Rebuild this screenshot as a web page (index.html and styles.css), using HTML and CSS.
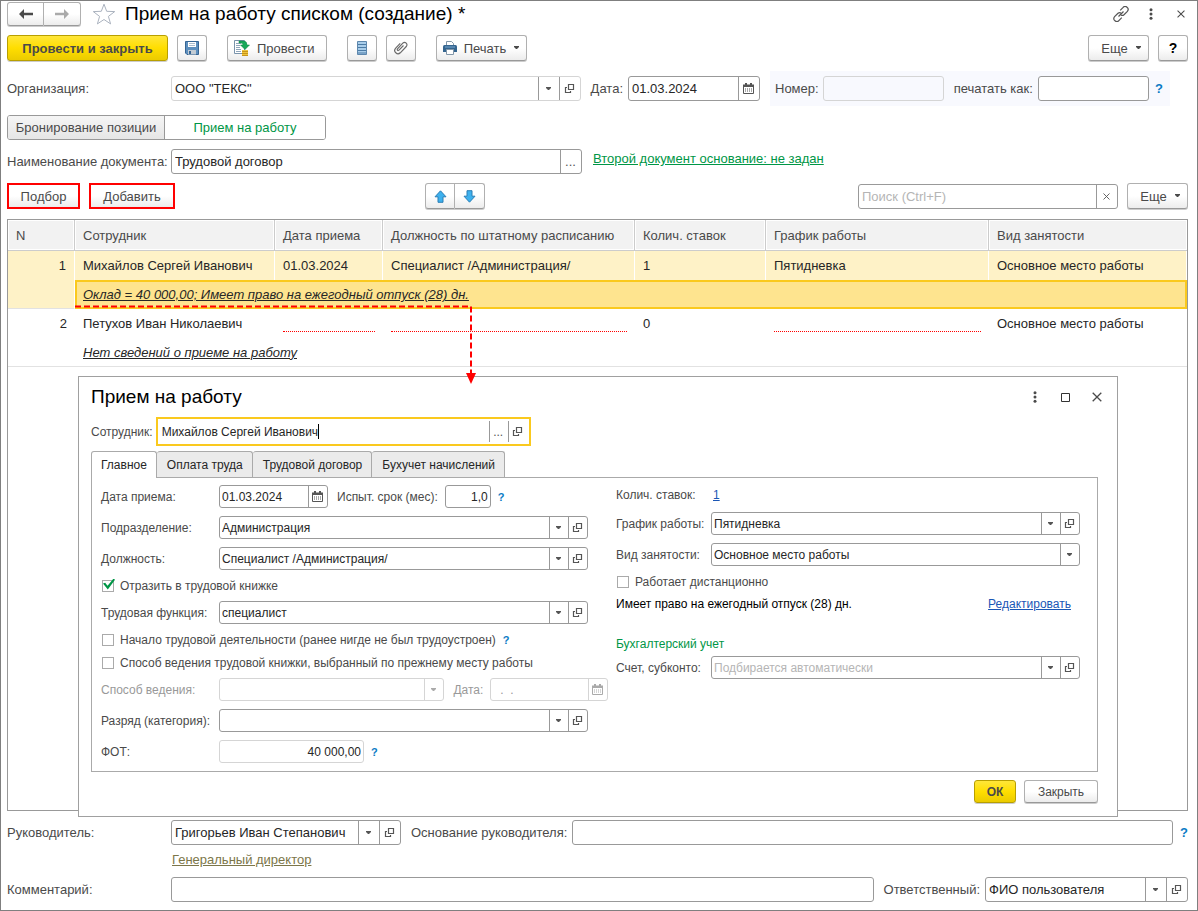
FILE: index.html
```html
<!DOCTYPE html>
<html lang="ru">
<head>
<meta charset="utf-8">
<title>Прием на работу списком (создание)</title>
<link rel="stylesheet" href="styles.css">
</head>
<body>
<svg class="sprite" aria-hidden="true">
  <symbol id="i-drop" viewBox="0 0 7 4"><path d="M1 0h5v1L4 3H3L1 1z" fill="currentColor"/></symbol>
  <symbol id="i-open" viewBox="0 0 11 11"><path d="M4.5 1.5h5v5h-5z" fill="none" stroke="currentColor" stroke-width="1.200"/><path d="M3 4.500H1.500v5h5V8" fill="none" stroke="currentColor" stroke-width="1.200"/></symbol>
  <symbol id="i-cal" viewBox="0 0 11 11"><path d="M1 1.500h1V0h2v1.500h3V0h2v1.500h2V4H0V1.500z" fill="currentColor"/><path d="M.5 3v7.500h10V3" fill="none" stroke="currentColor"/><path d="M2 6h7M2 8h7" stroke="currentColor" stroke-dasharray="1 1"/></symbol>
  <symbol id="i-dots" viewBox="0 0 4 12"><g fill="currentColor"><circle cx="2" cy="1.700" r="1.500"/><circle cx="2" cy="6" r="1.500"/><circle cx="2" cy="10.300" r="1.500"/></g></symbol>
  <symbol id="i-x" viewBox="0 0 10 10"><path d="M.7.7l8.600 8.600M9.300.7L.7 9.300" stroke="currentColor" stroke-width="1.300"/></symbol>
</svg>

<main class="window">
  <header class="titlebar">
    <div class="pair nav">
      <button class="btn" aria-label="Назад"><svg width="14" height="10" viewBox="0 0 14 10"><path d="M0 5l5-5v3.700h9v2.600H5V10z" fill="#4a4a4a"/></svg></button>
      <button class="btn" aria-label="Вперед"><svg width="14" height="10" viewBox="0 0 14 10"><path d="M14 5L9 0v3.700H0v2.600h9V10z" fill="#aaa"/></svg></button>
    </div>
    <button class="icon-btn star" aria-label="В избранное"><svg width="24" height="22" viewBox="0 0 24 22"><path d="M12 1.200l2.700 7.100 8 .3-6.300 4.800 2.200 7.500L12 16.500l-6.600 4.400 2.200-7.500L1.300 8.600l8-.3z" fill="#fff" stroke="#abb3bf"/></svg></button>
    <h1>Прием на работу списком (создание) *</h1>
    <div class="window-tools">
      <button class="icon-btn" aria-label="Ссылка"><svg width="16" height="16" viewBox="0 0 16 16" fill="none" stroke="#555" stroke-width="1.200"><path d="M7.200 4.300l2.700-2.700a2.600 2.600 0 0 1 4.500 3.700L11 8.700a2.500 2.500 0 0 1-3 .3M8.800 11.700l-2.700 2.700a2.600 2.600 0 0 1-4.500-3.700L5 7.300a2.500 2.500 0 0 1 3-.3M5.500 10.500l5-5"/></svg></button>
      <button class="icon-btn" aria-label="Меню"><svg width="4" height="12"><use href="#i-dots"/></svg></button>
      <button class="icon-btn" aria-label="Закрыть окно"><svg width="8" height="8"><use href="#i-x"/></svg></button>
    </div>
  </header>

  <div class="toolbar">
    <button class="btn primary post-close">Провести и закрыть</button>
    <button class="btn square" aria-label="Записать"><svg width="14" height="14" viewBox="0 0 14 14"><path d="M.5.5h13v13H2L.5 12z" fill="#5d8fbe" stroke="#366594"/><path d="M3 1h8v5H3z" fill="#fff"/><path d="M4 2.500h6M4 4.500h6" stroke="#a9bccd"/><path d="M3 9h8v4.500H3z" fill="#c3ccd4"/><path d="M4 10h2v3H4z" fill="#366594"/></svg></button>
    <button class="btn post"><svg width="16" height="16" viewBox="0 0 16 16"><path d="M.5.5h10v13H.5z" fill="#fff" stroke="#7993ab"/><path d="M2 3.500h5M2 5.500h4M2 7.500h4M2 9.500h5M2 11.500h5" stroke="#8fa5ba"/><path d="M5 1h4.500q3.500 0 3.500 4h2.500L11 9.500 6.500 5H9q0-2-2-2H5z" fill="#16a85a" stroke="#0b8342" stroke-width=".5"/><path d="M8 10h6v5.500H8z" fill="#f0c53d"/><path d="M8 11.500h6M8 13.500h6M8 15.500h6" stroke="#c6951b"/></svg>Провести</button>
    <button class="btn square" aria-label="Реестр"><svg width="10" height="14" viewBox="0 0 10 14"><path d="M.5.500h9v13h-9z" fill="#a9cdea" stroke="#5d87ad"/><path d="M1 3.500h8M1 6.500h8M1 9.500h8M1 12h8" stroke="#4c7ba5"/></svg></button>
    <button class="btn square" aria-label="Файлы"><svg width="14" height="14" viewBox="0 0 14 14" fill="none" stroke="#6b6b6b" stroke-width="1.200"><path d="M9.500 4.500L5 9.200a1 1 0 0 1-1.500-1.400l5.300-5.600a2.400 2.400 0 0 1 3.500 3.300l-6 6.300a3.300 3.300 0 0 1-4.800-4.500l4.700-5"/></svg></button>
    <button class="btn print"><svg width="14" height="14" viewBox="0 0 14 14"><path d="M3.500 5V.500h5l2 2V5" fill="#fff" stroke="#8297a9"/><path d="M0 5.500Q0 4 1.500 4h11Q14 4 14 5.500V11H0z" fill="#35658f"/><path d="M2 6h10" stroke="#78a9d1"/><path d="M3.500 8.500h7v5h-7z" fill="#fff" stroke="#8297a9"/></svg>Печать<svg class="caret" width="7" height="4"><use href="#i-drop"/></svg></button>
    <button class="btn more push">Еще<svg class="caret" width="7" height="4"><use href="#i-drop"/></svg></button>
    <button class="btn square help-btn" aria-label="Справка">?</button>
  </div>

  <div class="row org-row">
    <label class="side" for="org">Организация:</label>
    <div class="field soft org"><input id="org" value='ООО "ТЕКС"'><button aria-label="Выбрать"><svg width="7" height="4"><use href="#i-drop"/></svg></button><button aria-label="Открыть"><svg width="11" height="11"><use href="#i-open"/></svg></button></div>
    <label class="gap-l" for="date">Дата:</label>
    <div class="field date"><input id="date" value="01.03.2024"><button aria-label="Календарь"><svg width="11" height="11"><use href="#i-cal"/></svg></button></div>
    <div class="number-panel">
      <label for="num">Номер:</label>
      <div class="field soft num"><input id="num" disabled></div>
      <label class="gap-l" for="printas">печатать как:</label>
      <div class="field as"><input id="printas"></div>
      <button class="hint" aria-label="Подсказка">?</button>
    </div>
  </div>

  <div class="segment">
    <button>Бронирование позиции</button>
    <button class="on">Прием на работу</button>
  </div>

  <div class="row">
    <label class="side" for="docname">Наименование документа:</label>
    <div class="field docname"><input id="docname" value="Трудовой договор"><button aria-label="Выбрать">...</button></div>
    <a class="green second-doc" href="#">Второй документ основание: не задан</a>
  </div>

  <div class="toolbar list-bar">
    <button class="btn marked pick">Подбор</button>
    <button class="btn marked add">Добавить</button>
    <div class="pair move">
      <button class="btn" aria-label="Вверх"><svg width="13" height="13" viewBox="0 0 13 13"><path d="M6.500.8l5.500 6H9v5.500H4V6.800H1z" fill="#3db1ee" stroke="#2b7eb5"/></svg></button>
      <button class="btn" aria-label="Вниз"><svg width="13" height="13" viewBox="0 0 13 13"><path d="M6.500 12.200l5.500-6H9V.7H4v5.500H1z" fill="#3db1ee" stroke="#2b7eb5"/></svg></button>
    </div>
    <div class="field push search"><input aria-label="Поиск" placeholder="Поиск (Ctrl+F)"><button aria-label="Очистить"><svg width="7" height="7"><use href="#i-x"/></svg></button></div>
    <button class="btn more">Еще<svg class="caret" width="7" height="4"><use href="#i-drop"/></svg></button>
  </div>

  <div class="grid">
    <table>
      <colgroup><col class="c-n"><col class="c-emp"><col class="c-date"><col class="c-pos"><col class="c-rate"><col class="c-sched"><col></colgroup>
      <thead><tr><th>N</th><th>Сотрудник</th><th>Дата приема</th><th>Должность по штатному расписанию</th><th>Колич. ставок</th><th>График работы</th><th>Вид занятости</th></tr></thead>
      <tbody class="selected">
        <tr><td class="n">1</td><td>Михайлов Сергей Иванович</td><td>01.03.2024</td><td>Специалист /Администрация/</td><td>1</td><td>Пятидневка</td><td>Основное место работы</td></tr>
        <tr class="info"><td></td><td class="current" colspan="6"><a href="#">Оклад = 40 000,00; Имеет право на ежегодный отпуск (28) дн.</a></td></tr>
      </tbody>
      <tbody>
        <tr><td class="n">2</td><td>Петухов Иван Николаевич</td><td><span class="blank"></span></td><td><span class="blank"></span></td><td>0</td><td><span class="blank"></span></td><td>Основное место работы</td></tr>
        <tr class="info"><td></td><td colspan="6"><a href="#">Нет сведений о приеме на работу</a></td></tr>
      </tbody>
    </table>
  </div>

  <div class="row">
    <label class="side" for="head">Руководитель:</label>
    <div class="field head"><input id="head" value="Григорьев Иван Степанович"><button aria-label="Выбрать"><svg width="7" height="4"><use href="#i-drop"/></svg></button><button aria-label="Открыть"><svg width="11" height="11"><use href="#i-open"/></svg></button></div>
    <label class="gap-l" for="basis">Основание руководителя:</label>
    <div class="field grow"><input id="basis"></div>
    <button class="hint" aria-label="Подсказка">?</button>
  </div>
  <div class="row position-row"><a href="#">Генеральный директор</a></div>
  <div class="row">
    <label class="side" for="comment">Комментарий:</label>
    <div class="field grow"><input id="comment"></div>
    <label class="gap-l" for="resp">Ответственный:</label>
    <div class="field resp"><input id="resp" value="ФИО пользователя"><button aria-label="Выбрать"><svg width="7" height="4"><use href="#i-drop"/></svg></button><button aria-label="Открыть"><svg width="11" height="11"><use href="#i-open"/></svg></button></div>
  </div>

  <section class="dialog" role="dialog" aria-labelledby="dlg-title">
    <header>
      <h2 id="dlg-title">Прием на работу</h2>
      <div class="window-tools">
        <button class="icon-btn" aria-label="Меню"><svg width="4" height="12"><use href="#i-dots"/></svg></button>
        <button class="icon-btn" aria-label="Развернуть"><svg width="9" height="9" viewBox="0 0 9 9"><path d="M.5.5h8v8h-8z" fill="none" stroke="#333"/></svg></button>
        <button class="icon-btn" aria-label="Закрыть окно"><svg width="10" height="10"><use href="#i-x"/></svg></button>
      </div>
    </header>
    <div class="employee">
      <label for="emp">Сотрудник:</label>
      <div class="field focus"><input id="emp" value="Михайлов Сергей Иванович"><span class="cursor"></span><button aria-label="Выбрать">...</button><button aria-label="Открыть"><svg width="11" height="11"><use href="#i-open"/></svg></button></div>
    </div>
    <div class="tabs" role="tablist">
      <button role="tab" aria-selected="true">Главное</button>
      <button role="tab">Оплата труда</button>
      <button role="tab">Трудовой договор</button>
      <button role="tab">Бухучет начислений</button>
    </div>
    <div class="panel">
      <div class="left">
        <div class="line"><label for="d1">Дата приема:</label><div class="field d1"><input id="d1" value="01.03.2024"><button aria-label="Календарь"><svg width="11" height="11"><use href="#i-cal"/></svg></button></div><label class="inner" for="trial">Испыт. срок (мес):</label><div class="field trial"><input id="trial" value="1,0"></div><button class="hint" aria-label="Подсказка">?</button></div>
        <div class="line"><label for="dep">Подразделение:</label><div class="field grow"><input id="dep" value="Администрация"><button aria-label="Выбрать"><svg width="7" height="4"><use href="#i-drop"/></svg></button><button aria-label="Открыть"><svg width="11" height="11"><use href="#i-open"/></svg></button></div></div>
        <div class="line"><label for="pos">Должность:</label><div class="field grow"><input id="pos" value="Специалист /Администрация/"><button aria-label="Выбрать"><svg width="7" height="4"><use href="#i-drop"/></svg></button><button aria-label="Открыть"><svg width="11" height="11"><use href="#i-open"/></svg></button></div></div>
        <div class="check"><input type="checkbox" id="c1" checked><label for="c1">Отразить в трудовой книжке</label></div>
        <div class="line"><label for="func">Трудовая функция:</label><div class="field grow"><input id="func" value="специалист"><button aria-label="Выбрать"><svg width="7" height="4"><use href="#i-drop"/></svg></button><button aria-label="Открыть"><svg width="11" height="11"><use href="#i-open"/></svg></button></div></div>
        <div class="check"><input type="checkbox" id="c2"><label for="c2">Начало трудовой деятельности (ранее нигде не был трудоустроен)</label><button class="hint" aria-label="Подсказка">?</button></div>
        <div class="check"><input type="checkbox" id="c3"><label for="c3">Способ ведения трудовой книжки, выбранный по прежнему месту работы</label></div>
        <div class="line off"><label for="way">Способ ведения:</label><div class="field way"><select id="way" disabled><option></option></select><span class="arrow"><svg width="7" height="4"><use href="#i-drop"/></svg></span></div><label class="inner" for="d2">Дата:</label><div class="field d2"><input id="d2" value=".  ." disabled><button disabled aria-label="Календарь"><svg width="11" height="11"><use href="#i-cal"/></svg></button></div></div>
        <div class="line"><label for="cat">Разряд (категория):</label><div class="field grow"><input id="cat"><button aria-label="Выбрать"><svg width="7" height="4"><use href="#i-drop"/></svg></button><button aria-label="Открыть"><svg width="11" height="11"><use href="#i-open"/></svg></button></div></div>
        <div class="line"><label for="fot">ФОТ:</label><div class="field soft fot"><input id="fot" value="40 000,00" readonly></div><button class="hint" aria-label="Подсказка">?</button></div>
      </div>
      <div class="right">
        <div class="line short"><span class="cap">Колич. ставок:</span><a class="blue" href="#">1</a></div>
        <div class="line"><label for="sched">График работы:</label><div class="field grow"><input id="sched" value="Пятидневка"><button aria-label="Выбрать"><svg width="7" height="4"><use href="#i-drop"/></svg></button><button aria-label="Открыть"><svg width="11" height="11"><use href="#i-open"/></svg></button></div></div>
        <div class="line"><label for="kind">Вид занятости:</label><div class="field grow"><select id="kind"><option>Основное место работы</option></select><span class="arrow"><svg width="7" height="4"><use href="#i-drop"/></svg></span></div></div>
        <div class="check"><input type="checkbox" id="c4"><label for="c4">Работает дистанционно</label></div>
        <div class="vacation"><span>Имеет право на ежегодный отпуск (28) дн.</span><a class="blue" href="#">Редактировать</a></div>
        <div class="account">
          <h3>Бухгалтерский учет</h3>
          <div class="line"><label for="acc">Счет, субконто:</label><div class="field grow"><input id="acc" placeholder="Подбирается автоматически"><button aria-label="Выбрать"><svg width="7" height="4"><use href="#i-drop"/></svg></button><button aria-label="Открыть"><svg width="11" height="11"><use href="#i-open"/></svg></button></div></div>
        </div>
      </div>
    </div>
    <footer><button class="btn primary ok">ОК</button><button class="btn close">Закрыть</button></footer>
  </section>

  <svg class="pointer" width="404" height="80" viewBox="0 0 404 80" aria-hidden="true"><path d="M0 2.500h396v68" fill="none" stroke="#f00" stroke-width="2" stroke-dasharray="6 3"/><path d="M391 69h10l-5 11z" fill="#f00"/></svg>
</main>
</body>
</html>
```
FILE: styles.css
```css
* { box-sizing: border-box; }
body { margin: 0; background: #fff; }
body, button, input, select { font-family: "Liberation Sans", Arial, sans-serif; font-size: 13px; color: #4a4a4a; }
button { padding: 0; border: 0; background: none; }
h1, h2, h3 { margin: 0; font-weight: 400; color: #000; }
svg { display: block; flex: none; }
.sprite { position: absolute; width: 0; height: 0; }

.window { position: relative; display: flex; flex-direction: column; min-height: 100vh; padding: 0 9px 8px 6px; border: 1px solid #7f7f7f; }
.titlebar { display: flex; align-items: center; height: 25px; margin-bottom: 9px; }
h1, h2 { font-size: 19px; white-space: nowrap; }
.window-tools { display: flex; align-items: center; margin-left: auto; color: #555; }
.icon-btn { display: flex; align-items: center; justify-content: center; width: 30px; height: 24px; }
.icon-btn.star { width: 24px; margin: 0 9px 0 11px; }
.titlebar .window-tools { margin-right: -8px; }

.btn { display: flex; align-items: center; justify-content: center; height: 26px; border: 1px solid #b0b0b0; border-bottom-color: #999; border-radius: 3px; background: linear-gradient(#fff 50%, #ececec); box-shadow: 0 1px 0 #ccc; white-space: nowrap; }
.pair { display: flex; }
.pair .btn:first-child { border-radius: 3px 0 0 3px; }
.pair .btn:last-child { border-left: 0; border-radius: 0 3px 3px 0; }
.nav .btn { width: 37px; height: 24px; }
.primary { border-color: #b89f00; background: linear-gradient(#ffe63a, #ffde00 50%, #ebcb00); font-weight: 700; }
.toolbar { display: flex; align-items: flex-end; }
.post-close { width: 161px; margin-right: 9px; }
.square { width: 30px; margin-right: 9px; }
.post { gap: 7px; width: 100px; margin: 0 20px 0 11px; justify-content: flex-start; padding-left: 6px; }
.print { gap: 7px; width: 91px; margin-left: 11px; }
.more { gap: 7px; width: 61px; padding-left: 6px; }
.push { margin-left: auto; }
.help-btn { margin: 0 0 0 9px; color: #000; font-weight: 700; font-size: 14px; }

.row { display: flex; align-items: center; min-height: 25px; }
label, .cap { flex: none; white-space: nowrap; }
.side { width: 164px; }
.gap-l { margin: 0 5px 0 10px; }
.hint { color: #0b7bc5; font-weight: 700; padding-left: 7px; }

.field { display: flex; height: 25px; min-width: 0; overflow: hidden; border: 1px solid #999; border-radius: 3px; background: #fff; }
.field input, .field select { flex: 1; width: 0; min-width: 0; padding: 0 0 0 3px; border: 0; outline: 0; background: none; color: #262626; appearance: none; opacity: 1; }
.field input::placeholder { color: #b5b5b5; opacity: 1; }
.field button, .arrow { display: flex; align-items: center; justify-content: center; width: 21px; padding-right: 1px; border-left: 1px solid #999; color: #555; }
.soft { border-color: #d5d5d5; }
.grow { flex: 1; }
.org-row { height: 35px; margin-top: 10px; }
.org { flex: 1; }
.date { width: 132px; }
.number-panel { display: flex; align-items: center; align-self: stretch; width: 400px; margin: 0 18px 0 10px; padding-left: 5px; background: #f8f9fe; }
.num { width: 121px; margin-left: 4px; background: none; }
.as { flex: 1; }
.number-panel .hint { padding: 0 7px 0 6px; }

.segment { display: flex; width: 319px; height: 25px; margin: 9px 0; border: 1px solid #999; border-radius: 3px; overflow: hidden; }
.segment button { flex: 1; background: linear-gradient(#f5f5f5, #e6e6e6); }
.segment button.on { flex: 0 0 161px; border-left: 1px solid #999; background: #fff; color: #009646; }
.docname { width: 411px; }
a { color: inherit; }
.green { color: #009646; }
.second-doc { margin: 0 0 6px 11px; }
.list-bar { margin: 9px 0; }
.marked { border: 2px solid #f00; border-radius: 0; box-shadow: none; }
.pick { width: 73px; }
.add { width: 86px; margin-left: 9px; }
.move { margin-left: 250px; }
.move .btn { width: 30px; }
.search { width: 260px; margin-right: 9px; }
.list-bar .more, .toolbar .help-btn { margin-right: 0; }

.grid { flex: 1; min-height: 592px; margin: 1px 0 9px; border: 1px solid #999; }
table { width: 100%; border-collapse: separate; border-spacing: 0; table-layout: fixed; color: #262626; }
.c-n { width: 67px; } .c-emp { width: 200px; } .c-date { width: 108px; } .c-pos { width: 252px; } .c-rate { width: 131px; } .c-sched { width: 223px; }
th { height: 31px; padding: 0 8px; text-align: left; font-weight: 400; color: #4a4a4a; background: #f2f2f2; border-right: 1px solid #ccc; border-bottom: 1px solid #ccc; box-shadow: inset 0 0 0 1px #fff; white-space: nowrap; }
th:last-child { border-right: 0; }
td { height: 29px; padding: 0 8px; white-space: nowrap; }
td.n { text-align: right; }
.info td { border-bottom: 1px solid #e2e2e2; font-style: italic; }
.selected td { background: #fef2c7; border-right: 1px solid #fff; }
.selected td.current { border: 2px solid #fac91e; padding-left: 6px; background: #fee48f; }
.blank { display: block; height: 16px; border-bottom: 1px dotted #f00; }

.head { width: 230px; }
.position-row { min-height: 32px; padding: 0 0 3px 165px; color: #7c7649; }
.resp { width: 203px; }

.dialog { position: absolute; top: 375px; left: 77px; right: 79px; height: 441px; padding: 0 19px 0 12px; border: 1px solid #a0a0a0; background: #fff; }
.dialog, .dialog button, .dialog input, .dialog select { font-size: 12px; }
.dialog header { display: flex; align-items: center; height: 40px; }
.dialog .window-tools { margin-right: -14px; }
.dialog .icon-btn { width: 31px; }
.employee { display: flex; align-items: center; gap: 3px; height: 29px; }
.field.focus { width: 375px; height: 29px; padding: 2px; border: 2px solid #fac91e; border-radius: 0; }
.focus input { flex: 0 0 auto; width: auto; field-sizing: content; padding-left: 2px; }
.cursor { width: 1px; height: 15px; margin: 3px auto 0 0; background: #000; }
.dialog .field button, .dialog .arrow { width: 19px; }
.tabs { display: flex; height: 26px; margin-top: 5px; }
.tabs button { padding: 0 9px 0 10px; border: 1px solid #aaa; border-left-width: 0; border-bottom: 0; border-radius: 3px 3px 0 0; background: #ebebeb; color: #262626; }
.tabs button[aria-selected] { position: relative; z-index: 1; margin-bottom: -1px; padding-left: 9px; border-left-width: 1px; background: #fff; }
.panel { display: flex; height: 295px; padding: 7px 17px 8px 9px; border: 1px solid #aaa; }
.left, .right { display: flex; flex-direction: column; gap: 8px; }
.left { width: 507px; margin-right: 8px; }
.right { flex: 1; }
.line { display: flex; align-items: center; height: 23px; }
.line > label:first-child { width: 118px; }
.right .line > :first-child { width: 95px; }
.right .line.short > :first-child { width: 97px; }
.short { height: 19px; }
.dialog .field { height: 23px; }
.dialog .field.focus { height: 29px; }
.line .field input, .line .field select { padding-left: 2px; }
.left .grow { flex: 0 0 369px; }
.line .inner { margin: 0 7px 0 9px; }
.d1 { width: 109px; }
.trial { width: 46px; }
.line .trial input, .line .fot input { padding-right: 2px; text-align: right; }
.fot { width: 145px; }
.dialog .hint { font-size: 11px; }
.way { width: 226px; }
.d2 { width: 118px; }
.off .field, .off .field button, .off .arrow { border-color: #d5d5d5; color: #aaa; }
.off label, .off .field input { color: #999; }
.line .d2 input { padding-left: 9px; white-space: pre; }
.check { display: flex; align-items: center; height: 15px; }
.check input { position: relative; appearance: none; width: 12px; height: 12px; margin: 0 6px 0 1px; border: 1px solid #aaa; }
.check input:checked::after { content: ""; position: absolute; left: 0; top: -2px; width: 12px; height: 11px; background: #009646; clip-path: polygon(0 45%, 18% 38%, 38% 65%, 88% 0, 100% 12%, 40% 100%); }
.blue { color: #1a56b5; }
.vacation { display: flex; justify-content: space-between; height: 15px; padding-right: 9px; color: #000; white-space: nowrap; }
.account { display: flex; flex-direction: column; gap: 4px; margin-top: 17px; }
h3 { height: 15px; font-size: 12px; color: #009646; }
.dialog footer { display: flex; justify-content: flex-end; gap: 8px; margin-top: 8px; }
.dialog footer .btn { height: 23px; }
.ok { width: 42px; }
.close { width: 74px; }
.pointer { position: absolute; left: 74px; top: 303px; z-index: 2; pointer-events: none; }
```
